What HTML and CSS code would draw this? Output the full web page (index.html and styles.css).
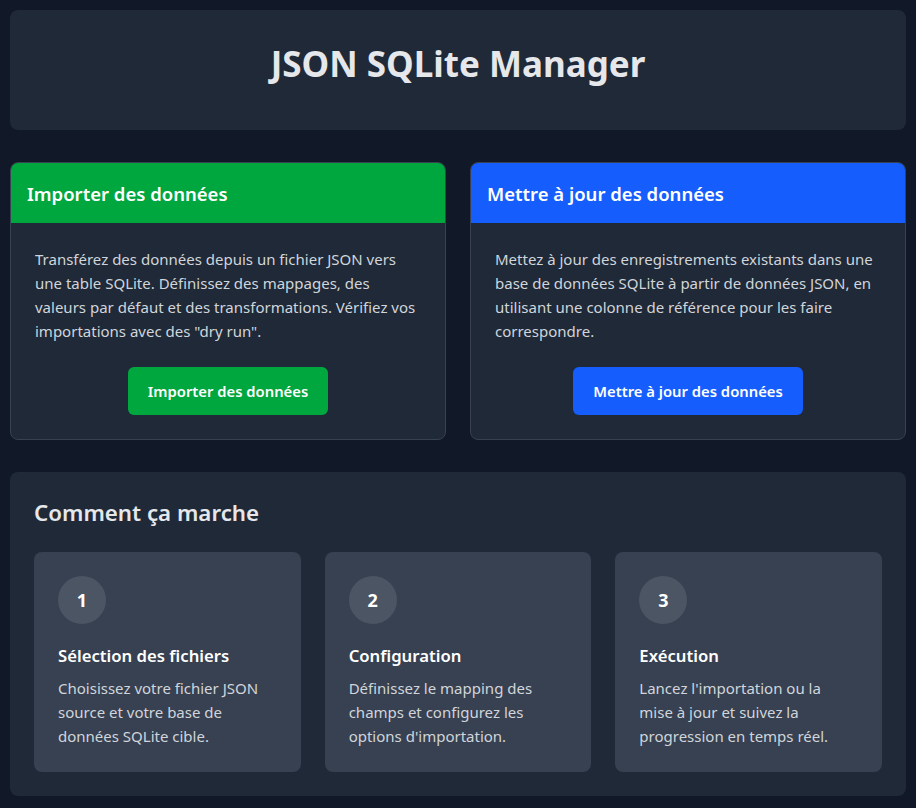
FILE: index.html
```html
<!DOCTYPE html>
<html lang="fr">
<head>
<meta charset="utf-8">
<title>JSON SQLite Manager</title>
<link rel="stylesheet" href="styles.css">
</head>
<body>
<div class="page">
  <header class="hero">
    <h1 class="hero-title">JSON SQLite Manager</h1>
  </header>

  <div class="actions">
    <section class="card">
      <div class="card-head green">Importer des données</div>
      <div class="card-body">
        <p class="card-text">Transférez des données depuis un fichier JSON vers une table SQLite. Définissez des mappages, des valeurs par défaut et des transformations. Vérifiez vos importations avec des "dry run".</p>
        <div class="btn-row"><button class="btn green">Importer des données</button></div>
      </div>
    </section>
    <section class="card">
      <div class="card-head blue">Mettre à jour des données</div>
      <div class="card-body">
        <p class="card-text">Mettez à jour des enregistrements existants dans une base de données SQLite à partir de données JSON, en utilisant une colonne de référence pour les faire correspondre.</p>
        <div class="btn-row"><button class="btn blue">Mettre à jour des données</button></div>
      </div>
    </section>
  </div>

  <section class="how">
    <h2 class="how-title">Comment ça marche</h2>
    <div class="steps">
      <div class="step">
        <div class="step-num">1</div>
        <h3 class="step-title">Sélection des fichiers</h3>
        <p class="step-text">Choisissez votre fichier JSON source et votre base de données SQLite cible.</p>
      </div>
      <div class="step">
        <div class="step-num">2</div>
        <h3 class="step-title">Configuration</h3>
        <p class="step-text">Définissez le mapping des champs et configurez les options d'importation.</p>
      </div>
      <div class="step">
        <div class="step-num">3</div>
        <h3 class="step-title">Exécution</h3>
        <p class="step-text">Lancez l'importation ou la mise à jour et suivez la progression en temps réel.</p>
      </div>
    </div>
  </section>
</div>
</body>
</html>
```

FILE: styles.css
```css
* { box-sizing: border-box; }
html, body { margin: 0; padding: 0; }
body {
  background: #111827;
  color: #e5e7eb;
  font-family: "Noto Sans", "Open Sans", sans-serif;
}
.page {
  padding: 10px;
  display: flex;
  flex-direction: column;
  gap: 32px;
}
.hero {
  background: #1f2937;
  border-radius: 8px;
  height: 120px;
  display: flex;
  align-items: center;
  justify-content: center;
  padding-bottom: 12px;
}
.hero-title {
  margin: 0;
  font-size: 35px;
  font-weight: 700;
  line-height: 40px;
  color: #e5e7eb;
}
.actions {
  display: grid;
  grid-template-columns: 1fr 1fr;
  gap: 24px;
}
.card {
  background: #1f2937;
  border: 1px solid #374151;
  border-radius: 8px;
  overflow: hidden;
}
.card-head {
  padding: 17px 16px 15px;
  font-size: 18.5px;
  font-weight: 600;
  line-height: 28px;
  color: #ffffff;
}
.green { background: #00a63e; }
.blue { background: #155dfc; }
.card-body {
  padding: 24px;
}
.card-text {
  margin: 0 0 24px;
  font-size: 15px;
  line-height: 24px;
  color: #d1d5db;
}
.btn-row {
  display: flex;
  justify-content: center;
}
.btn {
  font-family: inherit;
  border: none;
  border-radius: 6px;
  height: 48px;
  padding: 0 20px;
  font-size: 14.8px;
  font-weight: 600;
  color: #ffffff;
}
.how {
  background: #1f2937;
  border-radius: 8px;
  padding: 24px;
}
.how-title {
  margin: 1px 0 23px;
  font-size: 22.3px;
  font-weight: 600;
  line-height: 32px;
  color: #e5e7eb;
}
.steps {
  display: grid;
  grid-template-columns: repeat(3, 1fr);
  gap: 24px;
}
.step {
  background: #374151;
  border-radius: 8px;
  padding: 24px;
}
.step-num {
  width: 48px;
  height: 48px;
  border-radius: 50%;
  background: #4b5563;
  display: flex;
  align-items: center;
  justify-content: center;
  font-size: 18px;
  font-weight: 700;
  color: #ffffff;
  margin-bottom: 18px;
}
.step-title {
  margin: 0 0 6px;
  font-size: 16.7px;
  font-weight: 600;
  line-height: 28px;
  color: #ffffff;
}
.step-text {
  margin: 0;
  font-size: 15px;
  line-height: 24px;
  color: #d1d5db;
}
```
